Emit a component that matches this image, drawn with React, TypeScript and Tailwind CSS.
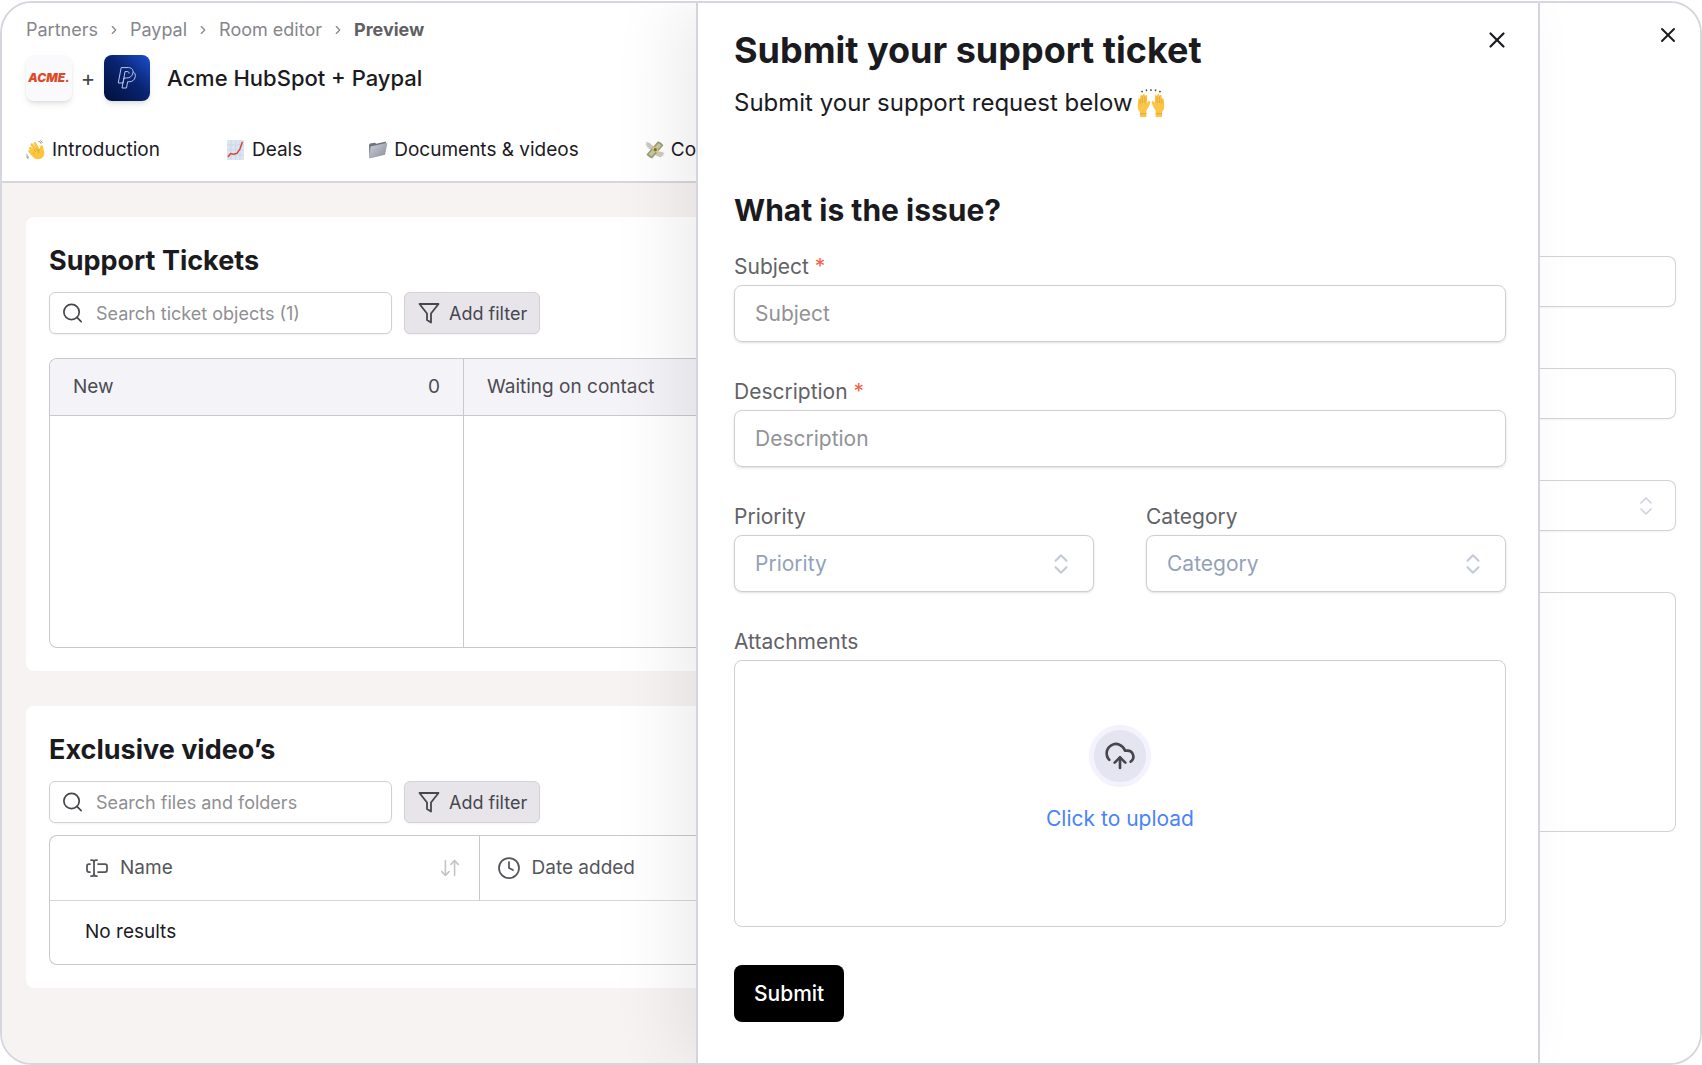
import type { ReactNode } from "react";
import {
  ChevronRight,
  ChevronsUpDown,
  Clock4,
  CloudUpload,
  ArrowDownUp,
  Search,
  TextCursorInput,
  X,
} from "lucide-react";

const crumbs = ["Partners", "Paypal", "Room editor"];

function WaveEmoji() {
  return (
    <svg viewBox="0 0 20 20" className="size-5 shrink-0" aria-hidden="true">
      <path
        d="M3.6 7.2c.7-.6 1.5-.4 2 .2L8 10 4.800 5.600c-.5-.8-.3-1.600.3-2 .7-.5 1.400-.3 1.900.3l3.400 4.600L7.800 4c-.4-.8-.1-1.500.5-1.800.7-.3 1.300 0 1.700.6l3.700 6.400.6-2.600c.2-.9.9-1.400 1.700-1.200.8.2 1.300.9 1.200 1.700-.3 1.800 1.200 3.600 1.200 5.900 0 3.600-2.900 6.200-6.300 6.200-2.300 0-4.300-1-5.700-2.700L2.700 12c-.6-.7-.5-1.400 0-1.900.6-.5 1.300-.3 1.900.3L7 12.600 3.300 9c-.6-.6-.3-1.400.3-1.800z"
        fill="#fbc53d"
      />
      <path d="M8 10l2 2M10.400 8.500l1.900 2.500M7 12.600l1.600 1.500M13.700 9.200c-1.200 1-1.500 2.200-1 3.600" stroke="#dc9420" strokeWidth=".7" fill="none" />
      <path d="M12.500 1.200c1.200.3 2.100 1.200 2.500 2.400M14.400.6c.9.500 1.600 1.200 1.900 2.200M.8 14.500c.2 1.400 1 2.300 2.200 2.900M.5 16.700c.4.900 1 1.600 1.900 2" stroke="#77777c" strokeWidth=".9" fill="none" />
    </svg>
  );
}

function ChartEmoji() {
  return (
    <svg viewBox="0 0 20 20" className="size-5 shrink-0" aria-hidden="true">
      <rect x="1" width="17" height="20" fill="#dce5f1" />
      <path d="M1 5h17M1 10h17M1 15h17M5 0v20M9.500 0v20M14 0v20" stroke="#c5d2e4" strokeWidth=".6" />
      <path d="M2 17l2.500-3.500 3 .8 3.500-1 3-4.500 2.500-7" stroke="#d6493b" strokeWidth="1.500" fill="none" />
    </svg>
  );
}

function FolderEmoji() {
  return (
    <svg viewBox="0 0 20 20" className="size-5 shrink-0" aria-hidden="true">
      <defs>
        <linearGradient id="folder" x1="0" y1="0" x2="1" y2="1">
          <stop offset="0" stopColor="#cdd1da" />
          <stop offset="1" stopColor="#868b97" />
        </linearGradient>
      </defs>
      <path d="M1 5l1-1.500 5-.8 1.200 1L18 1.500 16.500 14 1.500 18z" fill="#6f737e" />
      <path d="M2.500 6.500L19.500 2.800 17 14.800 1.500 18.600z" fill="url(#folder)" />
    </svg>
  );
}

function MoneyEmoji() {
  return (
    <svg viewBox="0 0 20 20" className="size-5 shrink-0" aria-hidden="true">
      <path d="M9 8C7 3.500 4 1.800.4 2.200L1.600 4 .4 4.800l2 1.200-1 1.200 2.400.3-.4 1.300L7 10zM11.500 12c3.500-1.200 6.500-.6 8.300 2l-2 .3.800 1.700-2.300-.2.300 1.700-2.200-.6L10 15z" fill="#c9c9c5" />
      <path d="M1.500 14.500L13 1.300c2.200.7 4 2 5.400 4L7 18.500c-2.200-.8-4.200-2.200-5.500-4z" fill="#989b72" />
      <path d="M3.600 14.200L13.300 3.200c1.200.4 2.200 1.200 3 2.200L6.700 16.400c-1.200-.5-2.300-1.200-3.100-2.200z" fill="#c5c89d" />
      <path d="M6.800 8.800l5 4.200 1.900-2.200-5-4.200z" fill="#ecca4c" />
      <circle cx="10.300" cy="9.700" r="1.600" fill="#6d7248" />
    </svg>
  );
}

function RaisedHandsEmoji() {
  return (
    <svg viewBox="0 0 26 26" className="size-7 shrink-0" aria-hidden="true">
      <g id="hand">
        <path
          d="M1.200 9.800c.2-1.500 1.600-1.400 1.700-.2l.2-3c.1-1.500 1.800-1.500 1.900 0l.3-1.300c.3-1.300 1.800-1.200 1.900.1l.3 1c.5-1.200 1.900-.9 1.800.5v6.500c.6-1.500 1.500-2.400 2.500-2.100.9.300.7 1.300.3 2.100-1 2.600-1.700 4.600-3.400 6.300V26H2.800v-4.700C.9 19.500.5 17.500.7 14.800z"
          fill="#fbc546"
        />
        <path d="M3 9.600v4M5 7v6M7.400 7v6.200M2.800 23h5.900" stroke="#e09b2d" strokeWidth=".7" fill="none" />
      </g>
      <use href="#hand" transform="matrix(-1 0 0 1 26 0)" />
      <path d="M5.200 3l-1-1.200M9 2l-.5-1.600M13 1.800V.2M17 2l.5-1.600M20.800 3l1-1.200" stroke="#45454b" strokeWidth="1.300" />
    </svg>
  );
}

function PaypalLogo() {
  return (
    <div className="flex size-[46px] items-center justify-center rounded-lg bg-linear-to-bl from-[#1a50d0] via-[#0a2472] via-45% to-[#020f3a] shadow-md">
      <svg viewBox="0 0 24 28" className="h-6 w-5" fill="none" stroke="#b9c6ea" strokeWidth="1.200" strokeLinejoin="round" role="img" aria-label="Paypal">
        <path d="M7.200 20H1.500L5 1.500h8.500c4 0 6.300 2.400 5.600 6.300-.8 4.400-3.700 6.200-7.800 6.200H8.400z" />
        <path d="M19.200 6.500c2.300 1.200 3.200 3.400 2.700 6-.8 4.200-3.600 6-7.400 6h-1.800L11.400 26H6l2.700-14.500" />
        <path d="M8.700 11.500l.9-5.200h2.600c1.800 0 2.500.9 2.200 2.400" />
      </svg>
    </div>
  );
}

function FilterIcon() {
  return (
    <svg viewBox="0 0 24 24" className="size-6" fill="none" stroke="currentColor" strokeWidth="1.800" strokeLinejoin="round" aria-hidden="true">
      <path d="M2.500 3h19L14 12.500v9l-4-2.500v-6.500z" />
    </svg>
  );
}

function Tab({ icon, children }: { icon: ReactNode; children: ReactNode }) {
  return (
    <a href="#" className="flex shrink-0 items-center gap-1.5 text-[19px] text-[#1b1b1f]">
      {icon}
      {children}
    </a>
  );
}

function Toolbar({ placeholder }: { placeholder: string }) {
  return (
    <div className="flex gap-3">
      <label className="relative">
        <Search className="absolute top-1/2 left-3 size-[23px] -translate-y-1/2 text-[#46464b]" strokeWidth={1.75} />
        <input
          type="search"
          aria-label={placeholder}
          placeholder={placeholder}
          className="h-[42px] w-[343px] rounded-md border border-[#d0d0d4] bg-white pr-3 pl-[46px] text-[18px] shadow-xs outline-none placeholder:text-[#8f8f94]"
        />
      </label>
      <button
        type="button"
        className="flex h-[42px] items-center gap-2 rounded-md border border-[#d3d2d7] bg-[#e7e5ea] px-3 text-[18px] text-[#46464e] shadow-xs"
      >
        <FilterIcon />
        Add filter
      </button>
    </div>
  );
}

function Field({ id, label, required, children }: { id: string; label: string; required?: boolean; children: ReactNode }) {
  return (
    <div className="flex flex-1 flex-col gap-0.5">
      <label htmlFor={id} className="text-[21px] leading-8 text-[#626267]">
        {label} {required && <span className="text-[#f9604a]">*</span>}
      </label>
      {children}
    </div>
  );
}

function TextField({ id, label }: { id: string; label: string }) {
  return (
    <Field id={id} label={label} required>
      <input
        id={id}
        type="text"
        placeholder={label}
        className="h-[57px] w-full rounded-lg border border-[#cfcfd3] px-5 text-[21px] shadow-sm outline-none placeholder:text-[#929297]"
      />
    </Field>
  );
}

function SelectField({ id, label }: { id: string; label: string }) {
  return (
    <Field id={id} label={label}>
      <div className="relative">
        <select
          id={id}
          defaultValue=""
          className="h-[57px] w-full appearance-none rounded-lg border border-[#cfcfd3] bg-white px-5 text-[21px] text-[#93a2bb] shadow-sm outline-none"
        >
          <option value="">{label}</option>
        </select>
        <ChevronsUpDown className="pointer-events-none absolute top-1/2 right-5 size-[26px] -translate-y-1/2 text-[#c3cad8]" strokeWidth={2} />
      </div>
    </Field>
  );
}

function RoomPreview() {
  return (
    <div className="flex min-w-0 flex-col overflow-hidden">
      <header className="border-b-2 border-[#d6d6dc] bg-white pl-6">
        <nav className="flex items-center gap-[9px] pt-[11px] text-[18px] leading-8 text-[#86868b]">
          {crumbs.map((crumb) => (
            <span key={crumb} className="flex items-center gap-[9px]">
              <a href="#">{crumb}</a>
              <ChevronRight className="size-[14px]" strokeWidth={2} />
            </span>
          ))}
          <span className="font-bold text-[#5f5f64]">Preview</span>
        </nav>
        <div className="mt-[9px] flex items-center">
          <div className="flex size-[46px] items-center justify-center rounded-lg bg-[#faf9fb] shadow-md">
            <span className="text-[12px] font-black text-[#dd4a2b] italic">ACME.</span>
          </div>
          <span className="w-8 text-center text-[22px] text-[#46464b]">+</span>
          <PaypalLogo />
          <h1 className="pl-[17px] text-[22px] font-medium text-[#1b1b1f]">Acme HubSpot + Paypal</h1>
        </div>
        <div className="flex h-20 items-center gap-[66px] pt-[18px]">
          <Tab icon={<WaveEmoji />}>Introduction</Tab>
          <Tab icon={<ChartEmoji />}>Deals</Tab>
          <Tab icon={<FolderEmoji />}>Documents & videos</Tab>
          <Tab icon={<MoneyEmoji />}>Co</Tab>
        </div>
      </header>

      <main className="flex flex-1 flex-col gap-[35px] bg-[#f6f3f2] pt-[34px] pl-6">
        <section className="rounded-l-lg bg-white pt-6 pb-[23px] pl-[23px]">
          <h2 className="mb-[11px] text-[27px] leading-10 font-bold text-[#1b1b1f]">Support Tickets</h2>
          <Toolbar placeholder="Search ticket objects (1)" />
          <div className="mt-6 flex overflow-hidden rounded-l-lg border border-r-0 border-[#c8c8cd] text-[19px] text-[#4c4c51]">
            <div className="w-[414px] shrink-0 border-r border-[#c8c8cd]">
              <div className="flex h-[57px] items-center justify-between border-b border-[#c8c8cd] bg-[#f4f3f8] px-[23px]">
                <span>New</span>
                <span>0</span>
              </div>
              <div className="h-[231px]" />
            </div>
            <div className="flex-1">
              <div className="flex h-[57px] items-center border-b border-[#c8c8cd] bg-[#f4f3f8] px-[23px]">Waiting on contact</div>
            </div>
          </div>
        </section>

        <section className="rounded-l-lg bg-white pt-6 pb-[23px] pl-[23px]">
          <h2 className="mb-[11px] text-[27px] leading-10 font-bold text-[#1b1b1f]">Exclusive video’s</h2>
          <Toolbar placeholder="Search files and folders" />
          <div className="mt-3 overflow-hidden rounded-l-lg border border-r-0 border-[#c8c8cd]">
            <table className="w-full text-left text-[19px]">
              <thead>
                <tr className="h-16 border-b border-[#d6d6da] text-[#55555a]">
                  <th className="w-[429px] border-r border-[#c8c8cd] pr-[18px] pl-[35px] font-normal">
                    <div className="flex items-center gap-[11px]">
                      <TextCursorInput className="size-6" strokeWidth={1.75} />
                      Name
                      <ArrowDownUp className="ml-auto size-[22px] text-[#c3c3c8]" strokeWidth={1.75} />
                    </div>
                  </th>
                  <th className="pl-[17px] font-normal">
                    <div className="flex items-center gap-[11px]">
                      <Clock4 className="size-6" strokeWidth={1.75} />
                      Date added
                    </div>
                  </th>
                </tr>
              </thead>
              <tbody>
                <tr className="h-16 text-[#1b1b1f]">
                  <td colSpan={2} className="pl-[35px]">No results</td>
                </tr>
              </tbody>
            </table>
          </div>
        </section>
      </main>
    </div>
  );
}

function TicketDrawer() {
  return (
    <form
      onSubmit={(e) => e.preventDefault()}
      className="relative z-10 flex min-w-0 flex-col border-x-2 border-[#d3d4dc] bg-white pt-[23px] pr-8 pb-6 pl-9 shadow-[-24px_0_60px_rgba(0,0,0,0.07)]"
    >
      <div className="flex items-start justify-between">
        <h2 className="text-[36px] leading-[48px] font-bold text-[#1b1b1f]">Submit your support ticket</h2>
        <button type="button" aria-label="Close ticket form" className="-mr-1 flex h-7 items-center">
          <X className="size-[26px] text-[#1b1b1f]" strokeWidth={2} />
        </button>
      </div>
      <p className="mt-[9px] flex items-center gap-1 text-[24px] leading-10 text-[#1b1b1f]">
        Submit your support request below
        <RaisedHandsEmoji />
      </p>

      <h3 className="mt-[67px] text-[30px] leading-10 font-bold text-[#1b1b1f]">What is the issue?</h3>
      <div className="mt-[21px] flex flex-col gap-[34px]">
        <TextField id="subject" label="Subject" />
        <TextField id="description" label="Description" />
        <div className="flex gap-[52px]">
          <SelectField id="priority" label="Priority" />
          <SelectField id="category" label="Category" />
        </div>
        <Field id="attachments" label="Attachments">
          <button
            id="attachments"
            type="button"
            className="flex h-[267px] w-full flex-col items-center justify-center gap-4 rounded-lg border border-[#cfcfd3] pb-7"
          >
            <span className="flex size-[62px] items-center justify-center rounded-full border-5 border-[#f3f2fd] bg-[#e4e5f0]">
              <CloudUpload className="size-8 text-[#46474d]" strokeWidth={2} />
            </span>
            <span className="text-[21px] leading-8 text-[#4a83fb]">Click to upload</span>
          </button>
        </Field>
      </div>
      <button type="submit" className="mt-[38px] h-[57px] self-start rounded-lg bg-black px-5 text-[21px] font-medium text-white">
        Submit
      </button>
    </form>
  );
}

// the drawer underneath, only its right edge peeks out
function BackDrawer() {
  return (
    <div className="flex min-w-0 flex-col bg-white pr-6">
      <button type="button" aria-label="Close drawer" className="mt-[18px] -mr-1 flex h-7 items-center self-end">
        <X className="size-6 text-[#1b1b1f]" strokeWidth={2} />
      </button>
      <div className="mt-[207px] flex flex-col gap-[61px]">
        <input type="text" aria-label="Name" className="h-[51px] w-full rounded-r-lg border border-l-0 border-[#d3d3d6] shadow-xs outline-none" />
        <input type="text" aria-label="Company" className="h-[51px] w-full rounded-r-lg border border-l-0 border-[#d3d3d6] shadow-xs outline-none" />
        <div className="relative">
          <select aria-label="Type" className="h-[51px] w-full appearance-none rounded-r-lg border border-l-0 border-[#d3d3d6] shadow-xs outline-none" />
          <ChevronsUpDown className="pointer-events-none absolute top-1/2 right-[18px] size-6 -translate-y-1/2 text-[#cfd3de]" strokeWidth={1.75} />
        </div>
        <textarea aria-label="Notes" className="h-60 w-full resize-none rounded-r-lg border border-l-0 border-[#d3d3d6] outline-none" />
      </div>
    </div>
  );
}

export default function App() {
  return (
    <div className="flex min-h-screen bg-white pt-px font-['Inter',sans-serif]">
      <div className="grid flex-1 grid-cols-[694fr_844fr_160fr] overflow-hidden rounded-[32px] border-2 border-[#d6d7de]">
        <RoomPreview />
        <TicketDrawer />
        <BackDrawer />
      </div>
    </div>
  );
}
